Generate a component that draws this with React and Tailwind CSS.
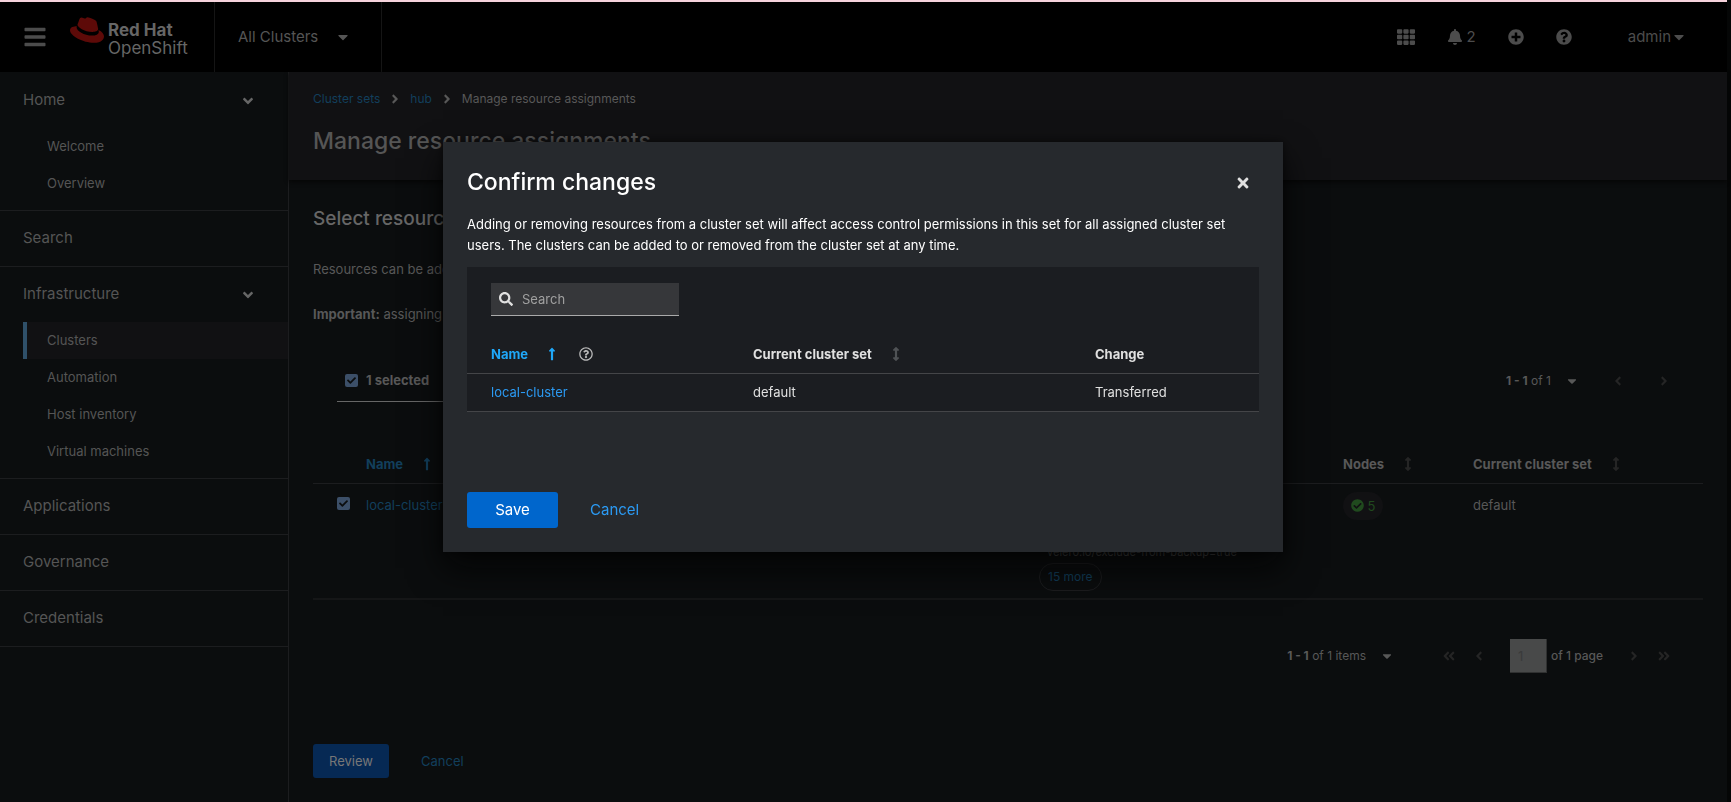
import React from "react";
import {
  FaAngleDoubleLeft, FaAngleDoubleRight, FaAngleDown, FaAngleLeft, FaAngleRight,
  FaArrowsAltV, FaBars, FaBell, FaCaretDown, FaCheck, FaCheckCircle, FaLongArrowAltUp,
  FaPlusCircle, FaQuestionCircle, FaRedhat, FaRegQuestionCircle, FaSearch, FaTh, FaTimes,
} from "react-icons/fa";

function Masthead() {
  return (
    <header className="flex h-[70px] items-center bg-black text-[#4c4c4c]">
      <button aria-label="Toggle navigation" className="ml-6 flex w-[22px] justify-center">
        <FaBars size={24} />
      </button>
      <a href="#home" className="ml-6 flex w-[144px] shrink-0 items-start gap-1 pt-[3px]">
        <FaRedhat size={34} className="-mt-2 text-[#5d0a08]" />
        <span className="text-[17px] leading-[18px] text-[#666]">
          <b className="block">Red Hat</b>
          OpenShift
        </span>
      </a>
      <button className="flex h-full w-[168px] items-center justify-between border-x border-[#151515] pr-[30px] pl-[23px] text-[15px] text-[#555]">
        All Clusters
        <FaCaretDown size={16} />
      </button>
      <div className="ml-auto flex items-center pr-10 text-[15px]">
        <button aria-label="Applications"><FaTh size={18} /></button>
        <button aria-label="Notifications" className="ml-8 flex items-center gap-1"><FaBell size={16} />2</button>
        <button aria-label="Add" className="ml-8"><FaPlusCircle size={16} /></button>
        <button aria-label="Help" className="ml-8"><FaQuestionCircle size={16} /></button>
        <button className="ml-14 flex items-center">admin<FaCaretDown size={16} /></button>
      </div>
    </header>
  );
}

function NavSection({ label, items, current }) {
  return (
    <li className="border-b border-[#1c1d1f] pb-2">
      <button className="flex h-[55px] w-full items-center justify-between pr-8 pl-[23px] text-[15px]">
        {label}
        <FaAngleDown size={16} className="text-[#666]" />
      </button>
      <ul className="pl-[23px] text-[13px]">
        {items.map((item) => (
          <li key={item}>
            <a
              href="#nav"
              className={
                item === current
                  ? "flex h-[37px] items-center border-l-4 border-[#2f5069] bg-[#111113] pt-px pl-5"
                  : "flex h-[37px] items-center pt-px pl-6"
              }
            >
              {item}
            </a>
          </li>
        ))}
      </ul>
    </li>
  );
}

function NavItem({ label }) {
  return (
    <li className="border-b border-[#1c1d1f]">
      <a href="#nav" className="flex h-[55px] items-center pl-[23px] text-[15px]">{label}</a>
    </li>
  );
}

function Sidebar() {
  return (
    <nav className="w-[289px] shrink-0 border-r border-[#1c1d1f] pt-px text-[#555]">
      <ul>
        <NavSection label="Home" items={["Welcome", "Overview"]} />
        <NavItem label="Search" />
        <NavSection
          label="Infrastructure"
          items={["Clusters", "Automation", "Host inventory", "Virtual machines"]}
          current="Clusters"
        />
        <NavItem label="Applications" />
        <NavItem label="Governance" />
        <NavItem label="Credentials" />
      </ul>
    </nav>
  );
}

function Checkbox({ label }) {
  return (
    <span className="relative flex size-[13px]">
      <input type="checkbox" defaultChecked aria-label={label} className="size-[13px] appearance-none rounded-xs bg-[#3c4f68]" />
      <FaCheck size={9} className="pointer-events-none absolute top-0.5 left-0.5 text-[#0b0d0e]" />
    </span>
  );
}

function PageHeader() {
  return (
    <div className="bg-[#111113] px-6 pt-[17px] pb-[23px] shadow-[0_2px_4px_#060606]">
      <nav aria-label="Breadcrumb" className="flex items-center gap-2 text-xs leading-5 text-[#585858]">
        <a href="#sets" className="text-[#123f5c]">Cluster sets</a>
        <FaAngleRight size={14} />
        <a href="#hub" className="text-[#123f5c]">hub</a>
        <FaAngleRight size={14} />
        <span>Manage resource assignments</span>
      </nav>
      <h1 className="mt-4 text-[23px] leading-8 font-medium text-[#555]">Manage resource assignments</h1>
    </div>
  );
}

function ResourceTable() {
  return (
    <table className="mt-[43px] w-full table-fixed text-left">
      <thead>
        <tr className="h-[38px] border-b border-[#1c1d1f]">
          <td className="w-[53px]" />
          <th className="font-bold text-[#123f5c]">
            <button className="flex items-center gap-[17px]">Name <FaLongArrowAltUp size={14} /></button>
          </th>
          <th className="w-[304px] font-bold">Labels</th>
          <th className="w-[130px] font-bold">
            <button className="flex items-center gap-[17px]">Nodes <FaArrowsAltV size={14} className="text-[#252525]" /></button>
          </th>
          <th className="w-[230px] font-bold">
            <button className="flex items-center gap-[17px]">Current cluster set <FaArrowsAltV size={14} className="text-[#252525]" /></button>
          </th>
        </tr>
      </thead>
      <tbody>
        <tr className="h-[116px] border-b-2 border-[#151617] align-top">
          <td className="pt-[13px] pl-6"><Checkbox label="Select local-cluster" /></td>
          <td className="pt-[11px]"><a href="#cluster" className="text-[#123f5c]">local-cluster</a></td>
          <td className="pt-[58px]">
            <span className="flex h-5 w-fit items-center px-2 text-[11px] text-[#555]">velero.io/exclude-from-backup=true</span>
            <button className="mt-px h-7 rounded-full border border-[#1c1d1f] px-2 text-xs text-[#123f5c]">15 more</button>
          </td>
          <td className="pt-2">
            <span className="flex h-7 w-10 items-center justify-center gap-1 rounded-full bg-[#111113] text-[#204a1e]">
              <FaCheckCircle size={13} />5
            </span>
          </td>
          <td className="pt-[11px]">default</td>
        </tr>
      </tbody>
    </table>
  );
}

function Page() {
  return (
    <main className="min-w-0 flex-1 text-[13px] leading-5 text-[#585858]">
      <PageHeader />
      <div className="px-6 pt-[25px] pb-6">
        <h2 className="text-[19px] leading-7 font-medium text-[#666]">Select resources</h2>
        <p className="mt-[26px]">Resources can be added to the cluster set.</p>
        <p className="mt-[25px]"><b className="font-bold">Important:</b> assigning a resource will affect its permissions.</p>

        <div className="mt-[37px] flex h-[41px] items-center justify-between pl-6">
          <div className="flex h-full items-center border-b border-[#666] px-2 pb-0.5">
            <Checkbox label="Select all" />
            <button className="ml-2 flex items-center gap-3 font-bold">1 selected <FaCaretDown size={14} /></button>
          </div>
          <div className="flex items-center pr-8 pb-0.5 text-xs">
            <button className="flex items-center gap-3.5"><span><b className="font-bold">1 - 1</b> of 1</span><FaCaretDown size={14} /></button>
            <button aria-label="Previous page" className="ml-8 text-[#252525]"><FaAngleLeft size={14} /></button>
            <button aria-label="Next page" className="ml-8 text-[#252525]"><FaAngleRight size={14} /></button>
          </div>
        </div>

        <ResourceTable />

        <div className="mt-[39px] flex h-[34px] items-center justify-end pr-8 text-xs">
          <button className="flex items-center gap-3.5"><span><b className="font-bold">1 - 1</b> of 1 items</span><FaCaretDown size={14} /></button>
          <button aria-label="First page" className="ml-12 text-[#252525]"><FaAngleDoubleLeft size={14} /></button>
          <button aria-label="Previous page" className="ml-4 text-[#252525]"><FaAngleLeft size={14} /></button>
          <input aria-label="Current page" defaultValue="1" className="mr-1 ml-6 h-[34px] w-[37px] border-r border-b border-[#303131] bg-[#484949] pl-2 text-[13px] text-[#3a3b3b]" />
          <span className="font-medium">of 1 page</span>
          <button aria-label="Next page" className="ml-6 text-[#252525]"><FaAngleRight size={14} /></button>
          <button aria-label="Last page" className="ml-4 text-[#252525]"><FaAngleDoubleRight size={14} /></button>
        </div>

        <div className="mt-[71px] flex gap-8">
          <button className="h-[34px] w-[76px] rounded-[3px] bg-[#062954] text-[#777]">Review</button>
          <button className="text-[#123f5c]">Cancel</button>
        </div>
      </div>
    </main>
  );
}

function ConfirmDialog() {
  return (
    <div className="fixed inset-0 flex items-start justify-center pt-[142px] pr-[5px]">
      <section role="dialog" aria-modal="true" aria-labelledby="dialog-title" className="w-[840px] bg-[#26292d] p-6 text-[13px] leading-5 text-[#e0e0e0] shadow-[0_16px_32px_rgba(3,3,3,0.8),0_0_8px_rgba(3,3,3,0.5)]">
        <div className="flex items-center justify-between pr-2">
          <h1 id="dialog-title" className="text-[23px] leading-8 font-medium text-white">Confirm changes</h1>
          <button aria-label="Close" className="pt-0.5"><FaTimes size={16} /></button>
        </div>
        <p className="mt-4 leading-[21px] text-white">
          Adding or removing resources from a cluster set will affect access control permissions in this set for all assigned cluster set users. The clusters can be added to or removed from the cluster set at any time.
        </p>
        <div className="mt-[11px] bg-[#1b1d21] pt-4">
          <label className="ml-6 flex h-[33px] w-[188px] items-center gap-[9px] border-b border-[#aaa] bg-[#36373a] px-2">
            <FaSearch size={14} className="shrink-0" />
            <input type="text" aria-label="Search" placeholder="Search" className="w-full min-w-0 bg-transparent outline-none placeholder:text-[#a0a0a0]" />
          </label>
          <table className="mt-5 w-full table-fixed text-left">
            <thead>
              <tr className="h-[37px] border-b border-[#444548]">
                <th className="w-[286px] pl-6 font-bold text-[#1fa7f8]">
                  <span className="flex items-center">
                    <button className="flex items-center gap-[17px]">Name <FaLongArrowAltUp size={14} /></button>
                    <button aria-label="About the name column" className="ml-5 text-[#b8b8b8]"><FaRegQuestionCircle size={14} /></button>
                  </span>
                </th>
                <th className="w-[342px] font-bold">
                  <button className="flex items-center gap-[17px]">Current cluster set <FaArrowsAltV size={14} className="text-[#4f5255]" /></button>
                </th>
                <th className="font-bold">Change</th>
              </tr>
            </thead>
            <tbody>
              <tr className="h-[38px] border-b border-[#444548]">
                <td className="pl-6"><a href="#cluster" className="text-[#2b9af3]">local-cluster</a></td>
                <td>default</td>
                <td>Transferred</td>
              </tr>
            </tbody>
          </table>
        </div>
        <div className="mt-20 flex gap-8 text-[15px]">
          <button className="h-9 w-[91px] rounded-[3px] bg-[#0066cc] text-white">Save</button>
          <button className="text-[#2b9af3]">Cancel</button>
        </div>
      </section>
    </div>
  );
}

export default function App() {
  return (
    <div className="min-h-screen bg-[#050606] pr-1 font-['Inter',sans-serif]">
      <div className="flex min-h-screen flex-col border-t-2 border-[#f6d3dc] bg-[#0b0d0e]">
        <Masthead />
        <div className="flex flex-1">
          <Sidebar />
          <Page />
        </div>
      </div>
      <ConfirmDialog />
    </div>
  );
}
